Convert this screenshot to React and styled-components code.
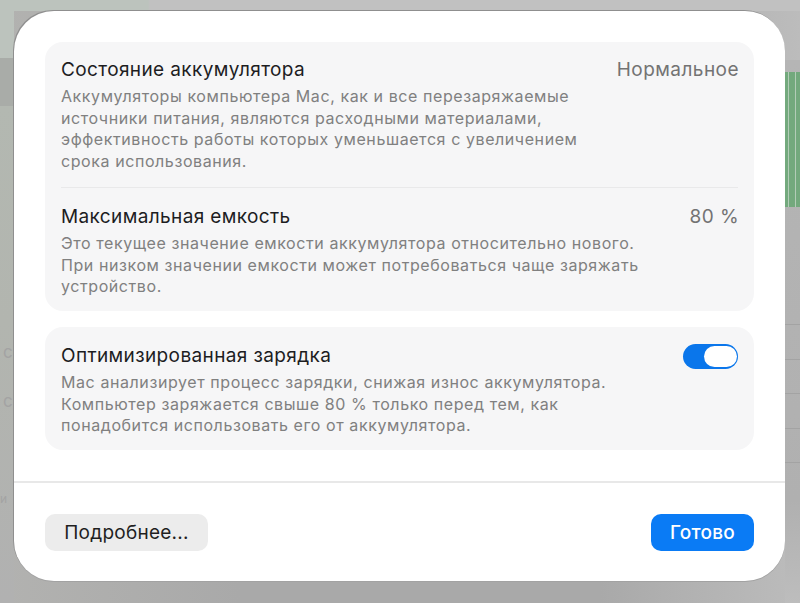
import React from "react";
import styled, { createGlobalStyle } from "styled-components";

const GlobalStyle = createGlobalStyle`
  html, body {
    margin: 0;
    padding: 0;
  }

  body {
    font-family: Inter, "Noto Sans", "Liberation Sans", sans-serif;
    -webkit-font-smoothing: antialiased;
  }
`;

const Page = styled.div`
  position: relative;
  width: 800px;
  height: 603px;
  padding: 11px 15px 22px 14px;
  box-sizing: border-box;
  overflow: hidden;
  background: linear-gradient(90deg, #b2b2b0 0%, #a9a9a9 30%, #a9a9a9 75%, #bcbcbc 100%);
`;

const SidebarTint = styled.div`
  position: absolute;
  left: 0;
  top: 0;
  width: 14px;
  height: 603px;
  background: linear-gradient(
    180deg,
    #bcc3bd 0,
    #bcc3bd 58px,
    #a9aca8 58px,
    #a9aca8 106px,
    #b3b8b1 106px,
    #b2b5af 320px,
    #b1b1b1 603px
  );
`;

const TopBar = styled.div`
  position: absolute;
  left: 0;
  top: 0;
  width: 800px;
  height: 11px;
  background: linear-gradient(90deg, #bcc3bd 0, #bcc3bd 148px, #c1c1c1 150px);
`;

const FadedLabel = styled.span`
  position: absolute;
  left: ${({ $x }) => $x}px;
  top: ${({ $y }) => $y}px;
  font-size: ${({ $size }) => $size}px;
  line-height: 20px;
  color: #a3a3a3;
`;

const RightPane = styled.div`
  position: absolute;
  right: 0;
  top: 60px;
  width: 15px;
  height: 543px;
  background: linear-gradient(180deg, #b5b5b5 0, #b0b0b0 440px, #bdbdbd 543px);
`;

const ChartBars = styled.div`
  display: flex;
  gap: 1px;
  height: 135px;
  margin-top: 12px;
  background: #b3ccb7;
`;

const ChartBar = styled.div`
  width: ${({ $w }) => $w}px;
  flex: none;
  background: #73a97d;
`;

const GridLine = styled.div`
  height: 1px;
  margin-bottom: 33.6px;
  background: #a3a3a3;
`;

const GridLines = styled.div`
  margin-top: 117px;
`;

const Dialog = styled.div`
  position: relative;
  display: flex;
  flex-direction: column;
  height: 570px;
  box-sizing: border-box;
  padding-top: 31px;
  background: #fff;
  border-radius: 40px;
  box-shadow: -1px -1px 0 #8f8f8f, 0 1px 0 #a2a2a2;
`;

const Content = styled.div`
  display: flex;
  flex-direction: column;
  gap: 16px;
  padding: 0 31px;
`;

const Card = styled.section`
  background: #f6f6f7;
  border-radius: 18px;
  padding: 0 16px;
  height: ${({ $h }) => $h}px;
  box-sizing: border-box;
`;

const Item = styled.div`
  padding-top: ${({ $top }) => $top}px;
  height: ${({ $h }) => $h}px;
  box-sizing: border-box;
  & + & {
    border-top: 1px solid #e9e9ea;
  }
`;

const ItemHead = styled.div`
  display: flex;
  align-items: center;
  justify-content: space-between;
  height: 24px;
`;

const Title = styled.h3`
  margin: 0;
  font-size: 19px;
  font-weight: 400;
  line-height: 24px;
  letter-spacing: 0.38px;
  color: #1d1d1f;
`;

const Value = styled.span`
  margin-right: -1px;
  font-size: 19px;
  line-height: 24px;
  letter-spacing: 0.45px;
  color: #737373;
`;

const Description = styled.p`
  margin: 4px 0 0;
  font-size: 16px;
  line-height: 21.7px;
  letter-spacing: 0.58px;
  white-space: pre-line;
  color: #808080;
`;

const Toggle = styled.div`
  display: flex;
  justify-content: flex-end;
  width: 55px;
  height: 25px;
  box-sizing: border-box;
  padding: 2px 1px;
  border-radius: 13px;
  background: #0a76eb;
`;

const Knob = styled.div`
  width: 33px;
  height: 21px;
  border-radius: 11px;
  background: #fff;
`;

const Footer = styled.footer`
  display: flex;
  align-items: center;
  justify-content: space-between;
  margin-top: 31px;
  padding: 31px 31px 0;
  border-top: 2px solid #e8e8e8;
`;

const Button = styled.button`
  height: 37px;
  width: ${({ $w }) => $w}px;
  padding: 0;
  border: 0;
  border-radius: 10px;
  font-family: inherit;
  font-size: 19px;
  letter-spacing: 0.25px;
  font-weight: ${({ $primary }) => ($primary ? 500 : 400)};
  color: ${({ $primary }) => ($primary ? "#fff" : "#1f1f1f")};
  background: ${({ $primary }) => ($primary ? "#0a7bf5" : "#ececec")};
`;

const bars = [3, 6, 4];

export default function App() {
  return (
    <Page>
      <GlobalStyle />
      <SidebarTint />
      <TopBar />
      <FadedLabel $x={3} $y={342} $size={17}>с</FadedLabel>
      <FadedLabel $x={3} $y={391} $size={17}>с</FadedLabel>
      <FadedLabel $x={0} $y={489} $size={12}>и</FadedLabel>
      <RightPane>
        <ChartBars>
          {bars.map((w) => (
            <ChartBar key={w} $w={w} />
          ))}
        </ChartBars>
        <GridLines>
          <GridLine />
          <GridLine />
          <GridLine />
          <GridLine />
          <GridLine />
        </GridLines>
      </RightPane>
      <Dialog>
        <Content>
          <Card $h={269}>
            <Item $top={16} $h={145}>
              <ItemHead>
                <Title>Состояние аккумулятора</Title>
                <Value>Нормальное</Value>
              </ItemHead>
              <Description>
                {"Аккумуляторы компьютера Mac, как и все перезаряжаемые\nисточники питания, являются расходными материалами,\nэффективность работы которых уменьшается с увеличением\nсрока использования."}
              </Description>
            </Item>
            <Item $top={17} $h={124}>
              <ItemHead>
                <Title>Максимальная емкость</Title>
                <Value>80 %</Value>
              </ItemHead>
              <Description>
                {"Это текущее значение емкости аккумулятора относительно нового.\nПри низком значении емкости может потребоваться чаще заряжать\nустройство."}
              </Description>
            </Item>
          </Card>
          <Card $h={123}>
            <Item $top={17} $h={123}>
              <ItemHead>
                <Title>Оптимизированная зарядка</Title>
                <Toggle>
                  <Knob />
                </Toggle>
              </ItemHead>
              <Description>
                {"Mac анализирует процесс зарядки, снижая износ аккумулятора.\nКомпьютер заряжается свыше 80 % только перед тем, как\nпонадобится использовать его от аккумулятора."}
              </Description>
            </Item>
          </Card>
        </Content>
        <Footer>
          <Button $w={163}>Подробнее...</Button>
          <Button $w={103} $primary>
            Готово
          </Button>
        </Footer>
      </Dialog>
    </Page>
  );
}
